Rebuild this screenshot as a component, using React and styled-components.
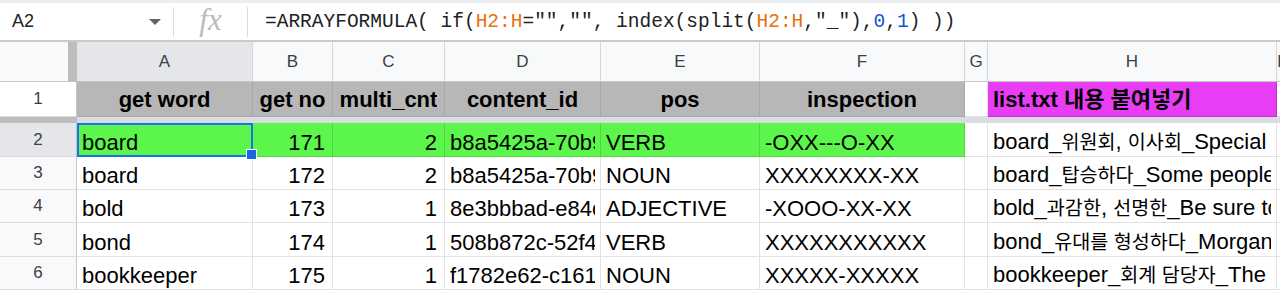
import React from 'react'
import styled, { createGlobalStyle } from 'styled-components'

const GlobalStyle = createGlobalStyle`
  body {
    margin: 0;
    background: #fff;
    font-family: "Liberation Sans", "Noto Sans CJK KR", Arial, sans-serif;
  }
`

const COLS = '77px 176px 80px 112px 156px 159px 205px 23px 289px 1fr'

const Page = styled.div`
  width: 1280px;
  height: 291px;
  overflow: hidden;
`

/* ---------- formula bar ---------- */

const FormulaBar = styled.div`
  display: flex;
  align-items: center;
  height: 37px;
  border-top: 3px solid #eceef1;
  border-bottom: 2px solid #c8cacc;
`

const NameBox = styled.div`
  width: 173px;
  box-sizing: border-box;
  padding: 0 12px;
  display: flex;
  align-items: center;
  justify-content: space-between;
  font-size: 18px;
  color: #202124;
`

const Caret = styled.span`
  width: 0;
  height: 0;
  border-left: 6px solid transparent;
  border-right: 6px solid transparent;
  border-top: 6px solid #5f6368;
`

const Divider = styled.div`
  width: 1px;
  height: 30px;
  background: #dadce0;
`

const FxBox = styled.div`
  width: 73px;
  text-align: center;
  font-family: "Liberation Serif", serif;
  font-style: italic;
  font-size: 31px;
  color: #b8bbbf;
  line-height: 1;
  padding-bottom: 4px;
`

const Formula = styled.div`
  padding-left: 17px;
  font-family: "Liberation Mono", "DejaVu Sans Mono", monospace;
  font-size: 19.5px;
  color: #202124;
  white-space: pre;
`

const Ref = styled.span`
  color: ${p => (p.$kind === 'num' ? '#1155cc' : '#e8710a')};
`

/* ---------- grid ---------- */

const Row = styled.div`
  display: grid;
  grid-template-columns: ${COLS};
  height: ${p => p.$h}px;
`

const ColHead = styled.div`
  box-sizing: border-box;
  display: flex;
  align-items: center;
  justify-content: center;
  font-size: 17px;
  color: #3c4043;
  background: ${p => (p.$active ? '#e4e6e9' : '#f8f9fa')};
  border-right: 1px solid #d4d6d8;
  border-bottom: 1px solid #c4c7c5;
`

const Corner = styled.div`
  box-sizing: border-box;
  background: #f8f9fa;
  border-right: 9px solid #bdbdbd;
  border-bottom: 1px solid #c4c7c5;
`

const RowHead = styled.div`
  box-sizing: border-box;
  display: flex;
  align-items: center;
  justify-content: center;
  font-size: 17px;
  color: #3c4043;
  background: ${p => (p.$active ? '#e4e6e9' : p.$white ? '#fff' : '#f8f9fa')};
  border-right: 1px solid #c4c7c5;
  border-bottom: 1px solid #dcdcdc;
`

const FrozenBar = styled.div`
  display: grid;
  grid-template-columns: 77px 1fr;
  height: 6px;
`

const FrozenPart = styled.div`
  background: ${p => (p.$dark ? '#bdbdbd' : '#d9dde3')};
`

const Cell = styled.div`
  box-sizing: border-box;
  position: relative;
  z-index: ${p => (p.$selected ? 2 : 0)};
  display: flex;
  align-items: ${p => (p.$head ? 'center' : 'flex-end')};
  justify-content: ${p =>
    p.$align === 'right' ? 'flex-end' : p.$align === 'center' ? 'center' : 'flex-start'};
  min-width: 0;
  padding: 0 ${p => (p.$align === 'right' ? 7 : 5)}px ${p => (p.$head ? 0 : 1)}px;
  background: ${p => p.$bg || '#fff'};
  border-right: 1px solid ${p => p.$line || '#e2e2e2'};
  border-bottom: 1px solid ${p => p.$line || '#e2e2e2'};
  font-size: 22px;
  line-height: 25px;
  font-weight: ${p => (p.$head ? 700 : 400)};
  color: #000;
`

const Text = styled.span`
  display: block;
  min-width: 0;
  overflow: hidden;
  white-space: nowrap;
`

// hangul runs render a touch narrower in the original sheet
const Ko = styled.span`
  font-size: 19.6px;
`

const Selection = styled.div`
  position: absolute;
  inset: 0 -1px -1px 0;
  border: 2px solid #1a73e8;
  pointer-events: none;
`

const Handle = styled.div`
  position: absolute;
  right: -6px;
  bottom: -5px;
  width: 9px;
  height: 9px;
  background: #1a66e0;
  border: 1px solid #fff;
`

const GRAY = '#b7b7b7'
const GREEN = '#5bf54b'
const MAGENTA = '#e93df5'

const headers = ['get word', 'get no', 'multi_cnt', 'content_id', 'pos', 'inspection']

const rows = [
  { n: 2, h: 34, w: 'board', no: 171, cnt: 2, id: 'b8a5425a-70b9-4c1e-9b3a', pos: 'VERB', insp: '-OXX---O-XX', list: 'board_위원회, 이사회_Special board meeting' },
  { n: 3, h: 33, w: 'board', no: 172, cnt: 2, id: 'b8a5425a-70b9-4c1e-9b3a', pos: 'NOUN', insp: 'XXXXXXXX-XX', list: 'board_탑승하다_Some people board the plane' },
  { n: 4, h: 33, w: 'bold', no: 173, cnt: 1, id: '8e3bbbad-e84c-41f0-a2b7', pos: 'ADJECTIVE', insp: '-XOOO-XX-XX', list: 'bold_과감한, 선명한_Be sure to use bold colors' },
  { n: 5, h: 34, w: 'bond', no: 174, cnt: 1, id: '508b872c-52f4-4a8d-b0e1', pos: 'VERB', insp: 'XXXXXXXXXXX', list: 'bond_유대를 형성하다_Morgan bonded with' },
  { n: 6, h: 33, w: 'bookkeeper', no: 175, cnt: 1, id: 'f1782e62-c161-47d3-8e45', pos: 'NOUN', insp: 'XXXXX-XXXXX', list: 'bookkeeper_회계 담당자_The bookkeeper' },
]

function Mixed({ text }) {
  return text
    .split(/([\u3131-\uD79D]+(?: [\u3131-\uD79D]+)*)/)
    .map((part, i) => (i % 2 ? <Ko key={i}>{part}</Ko> : part))
}

export default function App() {
  return (
    <Page>
      <GlobalStyle />
      <FormulaBar>
        <NameBox>
          A2
          <Caret />
        </NameBox>
        <Divider />
        <FxBox>fx</FxBox>
        <Divider />
        <Formula>
          =ARRAYFORMULA( if(<Ref>H2:H</Ref>="","", index(split(<Ref>H2:H</Ref>,"_"),<Ref $kind="num">0</Ref>,<Ref $kind="num">1</Ref>) ))
        </Formula>
      </FormulaBar>

      <Row $h={40}>
        <Corner />
        {['A', 'B', 'C', 'D', 'E', 'F', 'G', 'H', 'I'].map(c => (
          <ColHead key={c} $active={c === 'A'}>{c}</ColHead>
        ))}
      </Row>

      <Row $h={35}>
        <RowHead $white>1</RowHead>
        {headers.map(h => (
          <Cell key={h} $head $align="center" $bg={GRAY} $line="#a9a9a9">
            <Text>{h}</Text>
          </Cell>
        ))}
        <Cell />
        <Cell $head $bg={MAGENTA} $line="#c22fce">
          <Text>list.txt 내용 붙여넣기</Text>
        </Cell>
        <Cell />
      </Row>

      <FrozenBar>
        <FrozenPart $dark />
        <FrozenPart />
      </FrozenBar>

      {rows.map(r => {
        const hl = r.n === 2
        const bg = hl ? GREEN : undefined
        const line = hl ? '#4fd641' : undefined
        return (
          <Row key={r.n} $h={r.h}>
            <RowHead $active={hl}>{r.n}</RowHead>
            <Cell $bg={bg} $line={line} $selected={hl}>
              <Text>{r.w}</Text>
              {hl && (
                <Selection>
                  <Handle />
                </Selection>
              )}
            </Cell>
            <Cell $bg={bg} $line={line} $align="right"><Text>{r.no}</Text></Cell>
            <Cell $bg={bg} $line={line} $align="right"><Text>{r.cnt}</Text></Cell>
            <Cell $bg={bg} $line={line}><Text>{r.id}</Text></Cell>
            <Cell $bg={bg} $line={line}><Text>{r.pos}</Text></Cell>
            <Cell $bg={bg} $line={line}><Text>{r.insp}</Text></Cell>
            <Cell />
            <Cell><Text><Mixed text={r.list} /></Text></Cell>
            <Cell />
          </Row>
        )
      })}
    </Page>
  )
}
